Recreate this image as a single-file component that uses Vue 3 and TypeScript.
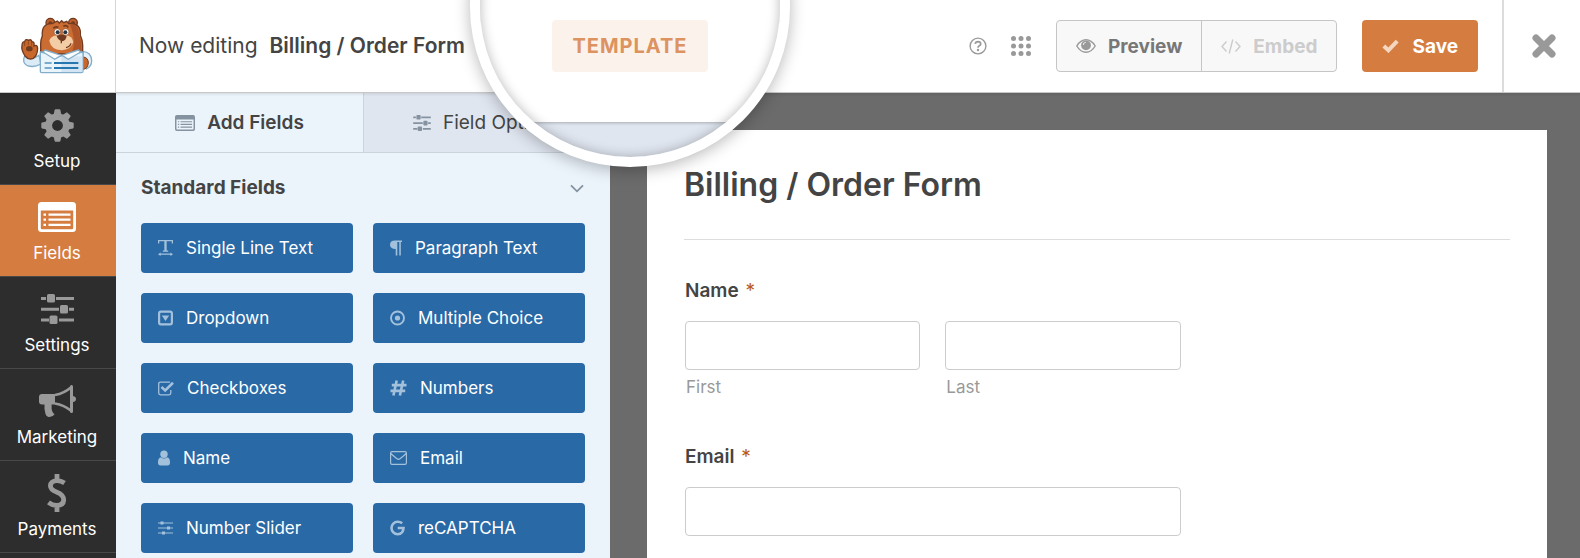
<script setup lang="ts">
interface NavItem {
  label: string
  icon: string
  width: number
  height: number
  active?: boolean
}

interface FieldButton {
  label: string
  icon: string
  width: number
}

const navItems: NavItem[] = [
  { label: 'Setup', icon: 'gear', width: 33, height: 33 },
  { label: 'Fields', icon: 'form', width: 38, height: 30, active: true },
  { label: 'Settings', icon: 'sliders', width: 33, height: 30 },
  { label: 'Marketing', icon: 'megaphone', width: 37, height: 33 },
  { label: 'Payments', icon: 'dollar', width: 20, height: 38 },
]

const fieldButtons: FieldButton[] = [
  { label: 'Single Line Text', icon: 'text-width', width: 15 },
  { label: 'Paragraph Text', icon: 'pilcrow', width: 12 },
  { label: 'Dropdown', icon: 'dropdown', width: 15 },
  { label: 'Multiple Choice', icon: 'radio', width: 15 },
  { label: 'Checkboxes', icon: 'checkbox', width: 16 },
  { label: 'Numbers', icon: 'hash', width: 17 },
  { label: 'Name', icon: 'user', width: 12 },
  { label: 'Email', icon: 'envelope', width: 17 },
  { label: 'Number Slider', icon: 'sliders-thin', width: 15 },
  { label: 'reCAPTCHA', icon: 'google', width: 15 },
]
</script>

<template>
  <div class="builder">
    <svg class="sprite" aria-hidden="true">
      <symbol id="gear" viewBox="0 0 33 33">
        <mask id="gear-hole">
          <rect width="33" height="33" fill="#fff" />
          <circle cx="16.5" cy="16.5" r="5.4" fill="#000" />
        </mask>
        <g fill="currentColor" mask="url(#gear-hole)">
          <circle cx="16.5" cy="16.5" r="12.3" />
          <path v-for="n in 8" :key="n" d="M12.6 6 L13.6 1 Q13.8 .3 14.5 .3 H18.5 Q19.2 .3 19.4 1 L20.4 6 Z" :transform="`rotate(${n * 45} 16.5 16.5)`" />
        </g>
      </symbol>
      <symbol id="form" viewBox="0 0 38 30">
        <path fill="currentColor" fill-rule="evenodd" d="M3.500 0H34.500Q38 0 38 3.500V26.500Q38 30 34.500 30H3.500Q0 30 0 26.500V3.500Q0 0 3.500 0ZM2.800 8.500V26Q2.800 27.200 4 27.200H34Q35.200 27.200 35.200 26V8.500Z" />
        <path fill="currentColor" d="M5.500 11.500h2.500v2.300h-2.500zM10.500 11.500h22v2.300h-22zM5.500 16.500h2.500v2.300h-2.500zM10.500 16.500h22v2.300h-22zM5.500 21.700h2.500v2.300h-2.500zM10.500 21.700h22v2.300h-22z" />
      </symbol>
      <symbol id="sliders" viewBox="0 0 33 30">
        <g fill="currentColor">
          <path d="M0 3h5v3H0zM15 3h18v3H15zM0 13.700h18v3H0zM28 13.700h5v3h-5zM0 24.500h8v3H0zM18 24.500h15v3H18z" />
          <rect x="6" width="8" height="8.500" rx="1.500" />
          <rect x="19" y="11" width="8" height="8.500" rx="1.500" />
          <rect x="8.500" y="21.500" width="8" height="8.500" rx="1.500" />
        </g>
      </symbol>
      <symbol id="sliders-thin" viewBox="0 0 15 15">
        <path d="M0 2.500h15M0 7.500h15M0 12.500h15" stroke="currentColor" stroke-width="1" />
        <path d="M2.500 1h3v3h-3zM9 6h3v3H9zM4 11h3v3H4z" fill="currentColor" />
      </symbol>
      <symbol id="megaphone" viewBox="0 0 37 33">
        <path fill="currentColor" d="M3 9H16V19.500H12.600Q12.300 24 13.300 26.500Q14 28.300 15.600 29.300Q13.500 32.500 9.500 32Q7.200 31.600 6.500 29Q5 24 5.500 19.500H3Q0 19.500 0 16.500V12Q0 9 3 9Z" />
        <path d="M16 10Q25 8.500 32.500 2V26Q25 20 16 18.500" fill="none" stroke="currentColor" stroke-width="2.600" stroke-linejoin="round" />
        <path fill="currentColor" d="M31 1.500Q31 0 32.500 0Q34 0 34 1.500V11Q37 11.500 37 14Q37 16.500 34 17V26.500Q34 28 32.500 28Q31 28 31 26.500Z" />
      </symbol>
      <symbol id="dollar" viewBox="0 0 20 38">
        <path d="M17.500 9Q13.800 6.500 9.800 6.600Q3.700 7 3.400 11.800Q3.400 15.800 10 18.200Q16.700 20.800 16.700 26Q16.400 31.200 10 31.400Q5.500 31.500 1.500 28.400M10 0V6M10 32V38" fill="none" stroke="currentColor" stroke-width="4.800" />
      </symbol>
      <symbol id="text-width" viewBox="0 0 15 16">
        <path d="M.6 3.500V.7H14.400V3.500M7.500 1V11M4.800 11.100H10.200" fill="none" stroke="currentColor" stroke-width="1.300" />
        <path d="M6.400 1H8.600V11H6.400ZM0 14.200L2.600 12.400V13.600H12.400V12.400L15 14.200L12.400 16V14.800H2.600V16Z" fill="currentColor" />
      </symbol>
      <symbol id="pilcrow" viewBox="0 0 12 15">
        <path d="M12 0V1.500H10.800V15H9.300V1.500H7.300V15H5.700V8.500Q0 8.300 0 4.200Q.2 0 5 0Z" fill="currentColor" />
      </symbol>
      <symbol id="dropdown" viewBox="0 0 15 15">
        <rect x="1.100" y="1.100" width="12.800" height="12.800" rx="1.800" fill="none" stroke="currentColor" stroke-width="2.200" />
        <path d="M3.800 5H11.200L7.500 10.500Z" fill="currentColor" />
      </symbol>
      <symbol id="radio" viewBox="0 0 15 15">
        <circle cx="7.500" cy="7.500" r="6.500" fill="none" stroke="currentColor" stroke-width="1.900" />
        <circle cx="7.500" cy="7.500" r="2.600" fill="currentColor" />
      </symbol>
      <symbol id="checkbox" viewBox="0 0 16 15">
        <path d="M12 1.600H2.500Q.7 1.600 .7 3.400V12.500Q.7 14.300 2.500 14.300H11Q12.800 14.300 12.800 12.500V9.500" fill="none" stroke="currentColor" stroke-width="1.300" />
        <path d="M3.500 6.500L7.200 10L15 2.300" fill="none" stroke="currentColor" stroke-width="2.600" />
      </symbol>
      <symbol id="hash" viewBox="0 0 17 15">
        <path d="M6.700 0L3.400 15M13.200 0L9.900 15M1.800 4.600H16.500M.5 10.400H15.200" fill="none" stroke="currentColor" stroke-width="2.600" />
      </symbol>
      <symbol id="user" viewBox="0 0 12 15">
        <path d="M3 6.800Q4.300 8 6 8T9 6.800Q12 7.300 12 12Q12 15 9.500 15H2.500Q0 15 0 12Q0 7.300 3 6.800Z" fill="currentColor" />
        <circle cx="6" cy="3.700" r="3.700" fill="currentColor" />
      </symbol>
      <symbol id="envelope" viewBox="0 0 17 14">
        <path d="M.6 2Q.6.6 2 .6H15Q16.400.6 16.400 2V12Q16.400 13.400 15 13.400H2Q.6 13.400 .6 12ZM.8 2.500Q3.500 5 7 7.700Q8.500 8.900 10 7.700Q13.500 5 16.200 2.500" fill="none" stroke="currentColor" stroke-width="1.200" />
      </symbol>
      <symbol id="google" viewBox="0 0 15 15">
        <path d="M12.200 2.800Q10.300 1.300 7.700 1.300A6.200 6.200 0 1 0 7.700 13.700Q13.200 13.500 13.500 7.500H7.700" fill="none" stroke="currentColor" stroke-width="2.600" />
      </symbol>
      <symbol id="help" viewBox="0 0 18 18">
        <circle cx="9" cy="9" r="7.900" fill="none" stroke="currentColor" stroke-width="1.400" />
        <path d="M6.300 6.800Q6.500 4.700 9 4.700Q11.700 4.800 11.700 6.900Q11.700 8.100 10.300 8.800Q9 9.500 9 10.700" fill="none" stroke="currentColor" stroke-width="1.700" />
        <circle cx="9" cy="13" r="1.200" fill="currentColor" />
      </symbol>
      <symbol id="dots" viewBox="0 0 20 20">
        <g fill="currentColor">
          <circle v-for="n in 9" :key="n" :cx="2.500 + ((n - 1) % 3) * 7.500" :cy="2.500 + Math.floor((n - 1) / 3) * 7.500" r="2.500" />
        </g>
      </symbol>
      <symbol id="eye" viewBox="0 0 20 14">
        <path d="M.8 7Q4.500 .8 10 .8T19.200 7Q15.500 13.200 10 13.200T.8 7Z" fill="none" stroke="currentColor" stroke-width="1.400" />
        <circle cx="10" cy="6.300" r="4.900" fill="currentColor" />
        <path d="M7.200 6Q7.300 3.500 9.800 3.300" fill="none" stroke="#f8f8f8" stroke-width=".9" />
      </symbol>
      <symbol id="code" viewBox="0 0 20 15">
        <path d="M5.500 2.500L1 7.500L5.500 12.500M14.500 2.500L19 7.500L14.500 12.500M11.800 .5L8.200 14.500" fill="none" stroke="currentColor" stroke-width="1.400" />
      </symbol>
      <symbol id="check" viewBox="0 0 17 14">
        <path d="M1.800 7L6.400 11.300L15.200 2.200" fill="none" stroke="currentColor" stroke-width="4" />
      </symbol>
      <symbol id="cross" viewBox="0 0 24 24">
        <path d="M4 4L20 20M20 4L4 20" fill="none" stroke="currentColor" stroke-width="7" stroke-linecap="round" />
      </symbol>
      <symbol id="chevron" viewBox="0 0 14 9">
        <path d="M1 1.300L7 7.300L13 1.300" fill="none" stroke="currentColor" stroke-width="1.800" />
      </symbol>
    </svg>

    <header class="toolbar">
      <a class="logo" href="#" aria-label="Home">
        <svg width="85" height="76" viewBox="0 0 255 228" aria-hidden="true">
          <path d="M72 142Q50 160 29 143Q20 164 37 173Q56 180 78 168Z" fill="#dcecf7" stroke="#83aecb" stroke-width="4" />
          <path d="M203 130Q229 132 230 158Q230 175 214 183L203 168Z" fill="#e6f2fa" stroke="#83aecb" stroke-width="4" />
          <path d="M204 147Q220 148 220 165Q218 183 204 184Z" fill="#c8662c" stroke="#713b20" stroke-width="3" />
          <path d="M30 144Q18 125 21 112Q22 100 29 101Q32 91 41 97Q49 92 51 102Q59 99 57 114Q67 108 68 121Q67 144 55 151Q40 157 30 144Z" fill="#c8662c" stroke="#713b20" stroke-width="4" />
          <ellipse cx="43" cy="122" rx="10" ry="8" fill="#713b20" />
          <path d="M29 102V114M40 100V111M50 103V113" stroke="#713b20" stroke-width="2" />
          <circle cx="106" cy="44" r="13" fill="#bd5f2a" stroke="#713b20" stroke-width="4" />
          <circle cx="174" cy="44" r="13" fill="#bd5f2a" stroke="#713b20" stroke-width="4" />
          <circle cx="106" cy="46" r="6" fill="#713b20" />
          <circle cx="174" cy="46" r="6" fill="#713b20" />
          <path d="M77 138V108Q77 95 82 83Q79 45 112 47L127 39L133 45L140 38L146 44L155 40L161 47Q199 44 196 82Q203 98 203 110V138Z" fill="#cb6d32" stroke="#713b20" stroke-width="4" />
          <path d="M165 49Q193 48 193 82Q200 98 200 136H168Q187 108 165 49Z" fill="#ad5528" />
          <path d="M103 98Q107 84 126 82H154Q171 84 175 102Q168 125 140 127Q108 125 103 98Z" fill="#f3cda5" />
          <circle cx="127" cy="72" r="10" fill="#fff" stroke="#8b4a26" stroke-width="2" />
          <circle cx="152" cy="72" r="10" fill="#fff" stroke="#8b4a26" stroke-width="2" />
          <circle cx="128" cy="73" r="6" fill="#263541" />
          <circle cx="151" cy="73" r="6" fill="#263541" />
          <path d="M115 61Q121 54 130 58M145 55Q153 50 160 58" fill="none" stroke="#713b20" stroke-width="5" />
          <path d="M125 84Q140 77 155 84Q153 98 141 100Q128 96 125 84Z" fill="#713b20" />
          <path d="M139 98V106M153 119Q165 116 168 106" fill="none" stroke="#713b20" stroke-width="4" />
          <path d="M76 132Q104 138 138 144Q174 138 204 132V190Q204 194 199 194H80Q76 194 76 190Z" fill="#e9f4fb" stroke="#83aecb" stroke-width="4" />
          <path d="M139 145H202V192H139Z" fill="#d3e5f2" />
          <path d="M90 126L139 142L119 154L84 132ZM190 126L141 142L160 154L197 132Z" fill="#fff" stroke="#83aecb" stroke-width="4" />
          <path d="M89 165H110M89 180H110" stroke="#5694c0" stroke-width="5" />
          <path d="M117 165H190M117 180H190" stroke="#2676b0" stroke-width="6" />
        </svg>
      </a>
      <p class="editing">Now editing <strong>Billing / Order Form</strong></p>
      <div class="tools">
        <button type="button" class="plain help" aria-label="Help"><svg width="18" height="18"><use href="#help" /></svg></button>
        <button type="button" class="plain apps" aria-label="More tools"><svg width="20" height="20"><use href="#dots" /></svg></button>
        <div class="group">
          <button type="button" class="preview"><svg width="20" height="14"><use href="#eye" /></svg>Preview</button>
          <button type="button" class="embed" disabled><svg width="20" height="15"><use href="#code" /></svg>Embed</button>
        </div>
        <button type="button" class="save"><svg width="17" height="14"><use href="#check" /></svg>Save</button>
      </div>
      <button type="button" class="plain close" aria-label="Close"><svg width="24" height="24"><use href="#cross" /></svg></button>
    </header>

    <div class="body">
      <nav class="sidebar">
        <a v-for="item in navItems" :key="item.label" href="#" class="nav-item" :class="{ active: item.active }">
          <span class="nav-icon"><svg :width="item.width" :height="item.height"><use :href="'#' + item.icon" /></svg></span>
          {{ item.label }}
        </a>
      </nav>

      <section class="panel">
        <div class="tabs">
          <button type="button" class="tab current"><svg width="20" height="16"><use href="#form" /></svg>Add Fields</button>
          <button type="button" class="tab"><svg width="18" height="16"><use href="#sliders" /></svg>Field Options</button>
        </div>
        <div class="group-body">
          <button type="button" class="group-head">Standard Fields<svg width="14" height="9"><use href="#chevron" /></svg></button>
          <div class="field-grid">
            <button v-for="field in fieldButtons" :key="field.label" type="button" class="field">
              <svg :width="field.width" height="16"><use :href="'#' + field.icon" /></svg>{{ field.label }}
            </button>
          </div>
        </div>
      </section>

      <main class="canvas">
        <form class="card">
          <h1>Billing / Order Form</h1>
          <fieldset>
            <legend>Name <span class="required">*</span></legend>
            <div class="pair">
              <div>
                <input id="first" type="text">
                <label class="sub" for="first">First</label>
              </div>
              <div>
                <input id="last" type="text">
                <label class="sub" for="last">Last</label>
              </div>
            </div>
          </fieldset>
          <div class="row">
            <label class="title" for="email">Email <span class="required">*</span></label>
            <input id="email" type="email">
          </div>
        </form>
      </main>
    </div>

    <div class="lens">
      <div class="lens-head"><span class="badge">TEMPLATE</span></div>
    </div>
  </div>
</template>

<style>
body {
  margin: 0;
}
</style>

<style scoped>
.builder {
  position: relative;
  display: flex;
  flex-direction: column;
  min-height: 100vh;
  overflow: hidden;
  color: #444;
  background: #6b6b6b;
  font-family: Inter, "Liberation Sans", sans-serif;
  font-size: 17px;
}

.builder * {
  box-sizing: border-box;
}

.sprite {
  position: absolute;
  width: 0;
  height: 0;
}

svg {
  flex: none;
}

button {
  display: flex;
  align-items: center;
  margin: 0;
  padding: 0;
  border: 0;
  background: none;
  color: inherit;
  font: inherit;
}

a {
  color: inherit;
  text-decoration: none;
}

.toolbar {
  z-index: 1;
  display: flex;
  align-items: stretch;
  height: 93px;
  background: #fff;
  border-bottom: 1px solid #c8c8c8;
  box-shadow: 0 1px 3px rgba(0, 0, 0, 0.12);
}

.logo {
  display: flex;
  align-items: center;
  justify-content: center;
  width: 116px;
  border-right: 1px solid #d6d6d6;
}

.editing {
  margin: 0;
  padding-left: 23px;
  font-size: 21px;
  line-height: 92px;
  white-space: nowrap;
}

.editing strong {
  margin-left: 6px;
  font-weight: 600;
}

.tools {
  display: flex;
  flex: 1;
  align-items: center;
  justify-content: flex-end;
  padding-right: 24px;
  font-size: 19px;
  font-weight: 700;
}

.plain {
  color: #999;
}

.apps {
  margin: 0 25px 0 24px;
}

.group {
  display: flex;
  height: 52px;
  overflow: hidden;
  color: #777;
  background: #f8f8f8;
  border: 1px solid #c6c6c6;
  border-radius: 4px;
}

.group button {
  gap: 12px;
  padding: 0 19px;
}

.preview svg {
  color: #999;
}

.group .embed {
  color: #ccc;
  border-left: 1px solid #c6c6c6;
}

.save {
  gap: 13px;
  height: 52px;
  margin-left: 25px;
  padding: 0 20px;
  color: #fff;
  background: #d57d41;
  border-radius: 4px;
}

.save svg {
  color: #f5d6c0;
}

.close {
  justify-content: center;
  width: 78px;
  padding-left: 4px;
  border-left: 2px solid #dcdcdc;
}

.body {
  display: flex;
  flex: 1;
}

.sidebar {
  width: 116px;
  background: #2d2d2d;
  color: #fff;
}

.nav-item {
  display: flex;
  flex-direction: column;
  align-items: center;
  height: 92px;
  padding: 12px 2px 0 0;
  line-height: 22px;
  border-bottom: 1px solid #484848;
}

.nav-icon {
  display: flex;
  align-items: center;
  height: 40px;
  margin-bottom: 5px;
  color: #999;
}

.active {
  background: #d57d41;
}

.active .nav-icon {
  color: #fff;
}

.panel {
  width: 494px;
  background: #ebf3fb;
}

.tabs {
  display: grid;
  grid-template-columns: 1fr 1fr;
  height: 60px;
  font-size: 19px;
  border-bottom: 1px solid #ccd3dc;
}

.tab {
  justify-content: center;
  gap: 12px;
  background: #e0e6f0;
  border-left: 1px solid #ccd3dc;
}

.tab svg {
  color: #8592a0;
}

.current {
  font-weight: 600;
  background: #ebf3fb;
  border-left: 0;
}

.group-body {
  padding: 23px 25px 6px;
}

.group-head {
  justify-content: space-between;
  width: 100%;
  padding-right: 1px;
  font-size: 19px;
  font-weight: 700;
  line-height: 24px;
}

.group-head svg {
  color: #8592a0;
}

.field-grid {
  display: grid;
  grid-template-columns: 1fr 1fr;
  gap: 20px;
  margin-top: 23px;
}

.field {
  gap: 13px;
  height: 50px;
  padding: 0 17px;
  color: #fff;
  background: #2969a6;
  border-radius: 4px;
}

.field svg {
  color: #a4c1dc;
}

.canvas {
  display: flex;
  flex: 1;
  padding: 37px 33px 0 37px;
}

.card {
  flex: 1;
  padding: 32px 37px 0;
  background: #fff;
}

h1 {
  margin: 0;
  padding-bottom: 31px;
  font-size: 32px;
  font-weight: 600;
  line-height: 46px;
  border-bottom: 1px solid #ddd;
}

fieldset,
.row {
  width: 60%;
  margin: 0 0 0 1px;
  padding: 0;
  border: 0;
}

fieldset {
  margin-top: 39px;
}

legend,
.title {
  display: block;
  margin-bottom: 18px;
  padding: 0;
  font-size: 19px;
  font-weight: 600;
  line-height: 24px;
}

.required {
  margin-left: 2px;
  color: #b85a1b;
  font-weight: 400;
}

.pair {
  display: grid;
  grid-template-columns: 1fr 1fr;
  gap: 25px;
}

input {
  display: block;
  width: 100%;
  height: 49px;
  padding: 0 12px;
  background: #fff;
  border: 1px solid #ccc;
  border-radius: 4px;
  font: inherit;
}

.sub {
  display: block;
  margin-top: 6px;
  padding-left: 1px;
  color: #999;
  line-height: 22px;
}

.row {
  margin-top: 47px;
}

.lens {
  position: absolute;
  z-index: 2;
  top: -153px;
  left: 470px;
  width: 320px;
  height: 320px;
  overflow: hidden;
  background: #e0e6f0;
  border: 10px solid #fff;
  border-radius: 50%;
  box-shadow: 0 3px 16px rgba(0, 0, 0, 0.28);
}

.lens::after {
  position: absolute;
  inset: 0;
  border-radius: 50%;
  box-shadow: inset 0 0 12px rgba(0, 0, 0, 0.28);
  content: "";
}

.lens-head {
  display: flex;
  justify-content: center;
  height: 265px;
  padding-top: 163px;
  background: #fff;
  box-shadow: 0 1px 3px rgba(0, 0, 0, 0.25);
}

.badge {
  height: 52px;
  padding: 0 20px;
  color: #dc9360;
  background: #fcf2ec;
  border-radius: 4px;
  font-size: 20px;
  font-weight: 700;
  letter-spacing: 1px;
  line-height: 52px;
}
</style>
